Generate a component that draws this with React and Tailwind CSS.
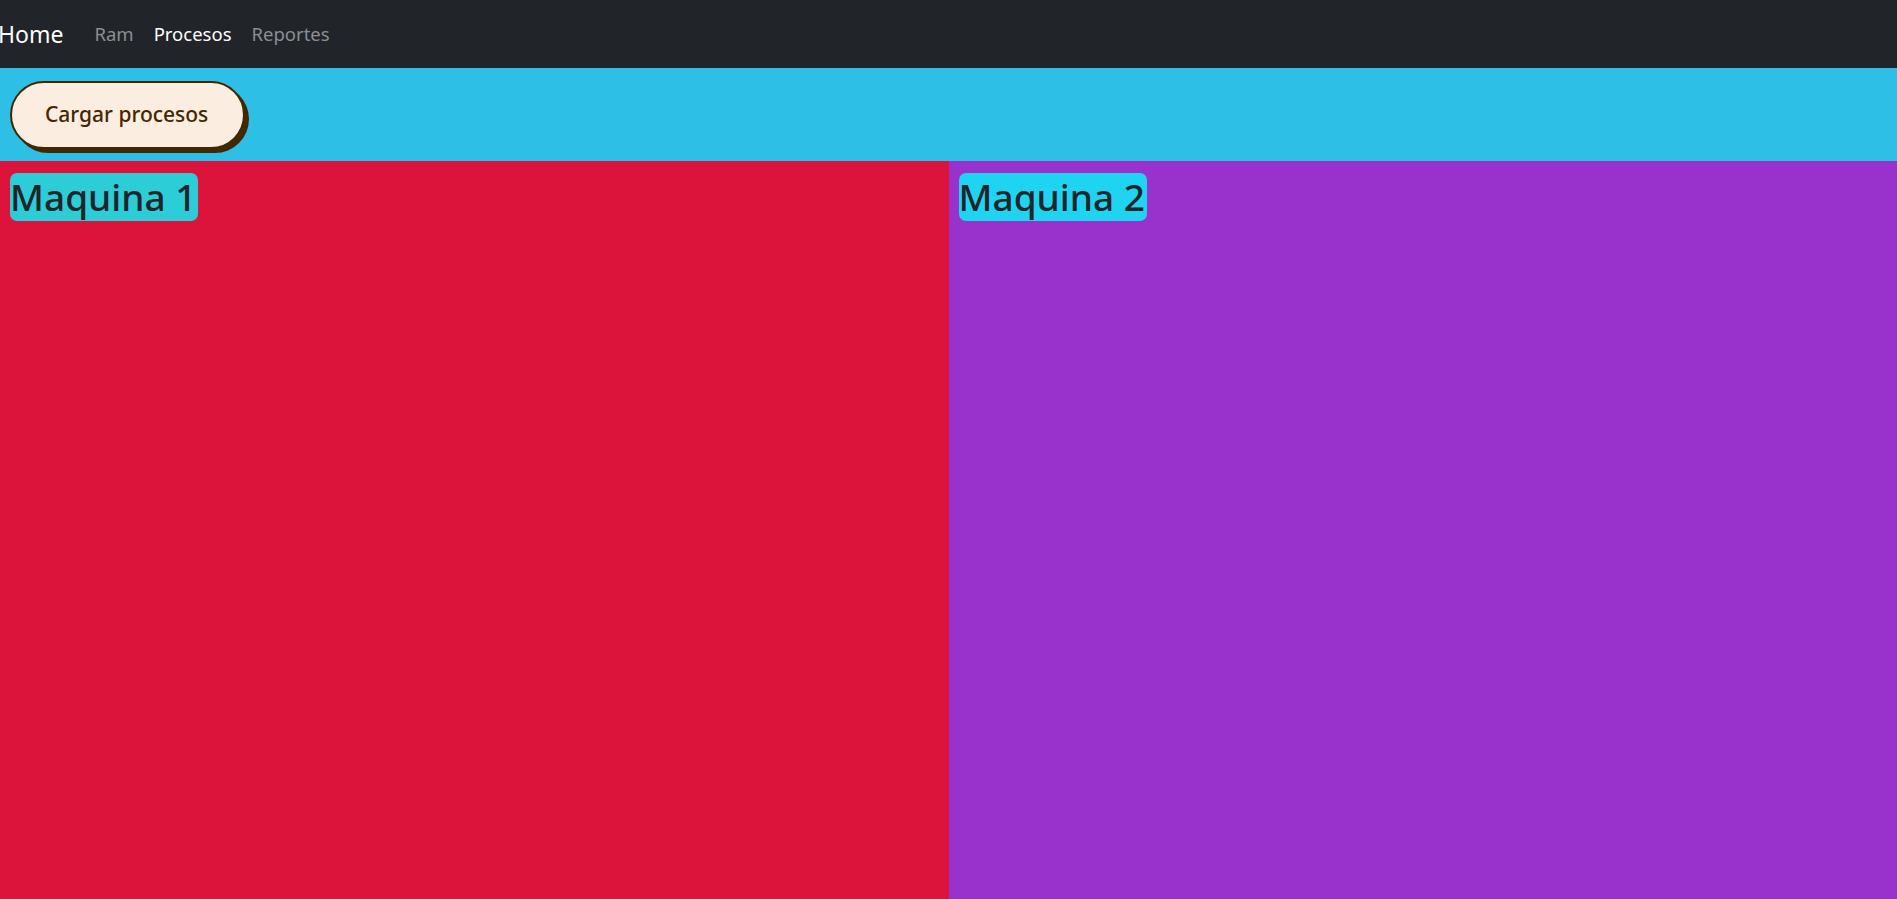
import React from 'react';

const font = { fontFamily: '"Noto Sans", "Open Sans", sans-serif' };

const Navbar = () => (
  <nav className="h-[68px] bg-[#212529] flex items-center">
    <span className="text-white text-[23px] leading-none mr-[31px] -ml-[2px]">Home</span>
    <div className="flex items-center gap-[20px] text-[18.5px] leading-none">
      <a className="text-[#8c8e91]">Ram</a>
      <a className="text-white">Procesos</a>
      <a className="text-[#8c8e91]">Reportes</a>
    </div>
  </nav>
);

const Maquina = ({ title, panelBg, titleBg }) => (
  <div className={`flex-1 ${panelBg} px-[10px] pt-[12px]`}>
    <h1 className={`inline-block ${titleBg} rounded-[7px] text-[#212529] text-[37px] font-medium leading-[48px] pr-[2px]`}>
      {title}
    </h1>
  </div>
);

export default function App() {
  return (
    <div className="min-h-screen flex flex-col" style={font}>
      <Navbar />

      {/* Barra de acciones */}
      <div className="h-[93px] bg-[#2ebfe6] px-[10px] pt-[13px]">
        <button className="h-[68px] pl-[33px] pr-[35px] rounded-full bg-[#fbede0] border-2 border-[#422800] shadow-[4px_4px_0_0_#422800] text-[#422800] text-[21px] font-medium">
          Cargar procesos
        </button>
      </div>

      <div className="flex flex-1">
        <Maquina title="Maquina 1" panelBg="bg-[#dc143c]" titleBg="bg-[#2ccdd6]" />
        <Maquina title="Maquina 2" panelBg="bg-[#9932cc]" titleBg="bg-[#1fd4f1]" />
      </div>
    </div>
  );
}
